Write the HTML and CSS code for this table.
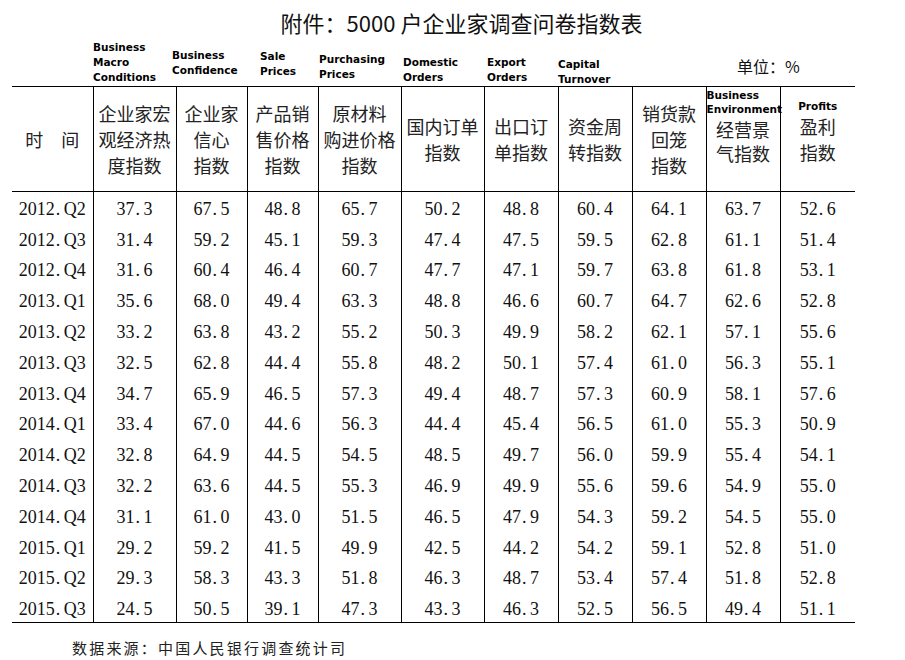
FILE: index.html
```html
<!DOCTYPE html>
<html lang="zh-CN">
<head>
<meta charset="utf-8">
<title>附件：5000 户企业家调查问卷指数表</title>
<link rel="stylesheet" href="styles.css">
</head>
<body>
<div class="page">
  <h1 class="title">附件：5000 户企业家调查问卷指数表</h1>
  <div class="labels">
    <div class="lab w81"></div>
    <div class="lab w83 l-macro">Business<br>Macro<br>Conditions</div>
    <div class="lab w71 l-conf">Business<br>Confidence</div>
    <div class="lab w71 l-sale">Sale<br>Prices</div>
    <div class="lab w83 l-purch">Purchasing<br>Prices</div>
    <div class="lab w83 l-dom">Domestic<br>Orders</div>
    <div class="lab w74 l-exp">Export<br>Orders</div>
    <div class="lab w74 l-cap">Capital<br>Turnover</div>
    <div class="unit">单位：%</div>
  </div>
  <table class="tbl">
    <colgroup>
      <col class="c81"><col class="c83"><col class="c71"><col class="c71"><col class="c83"><col class="c83"><col class="c74"><col class="c74"><col class="c74"><col class="c74"><col class="c75">
    </colgroup>
    <thead>
      <tr>
        <th>时　间</th>
        <th>企业家宏<br>观经济热<br>度指数</th>
        <th>企业家<br>信心<br>指数</th>
        <th>产品销<br>售价格<br>指数</th>
        <th>原材料<br>购进价格<br>指数</th>
        <th>国内订单<br>指数</th>
        <th>出口订<br>单指数</th>
        <th>资金周<br>转指数</th>
        <th>销货款<br>回笼<br>指数</th>
        <th class="has-en env"><span class="en en-left">Business<br>Environment</span>经营景<br>气指数</th>
        <th class="has-en"><span class="en en-center">Profits</span>盈利<br>指数</th>
      </tr>
    </thead>
    <tbody>
      <tr><td>2012<i>.</i>Q2</td><td>37<i>.</i>3</td><td>67<i>.</i>5</td><td>48<i>.</i>8</td><td>65<i>.</i>7</td><td>50<i>.</i>2</td><td>48<i>.</i>8</td><td>60<i>.</i>4</td><td>64<i>.</i>1</td><td>63<i>.</i>7</td><td>52<i>.</i>6</td></tr>
      <tr><td>2012<i>.</i>Q3</td><td>31<i>.</i>4</td><td>59<i>.</i>2</td><td>45<i>.</i>1</td><td>59<i>.</i>3</td><td>47<i>.</i>4</td><td>47<i>.</i>5</td><td>59<i>.</i>5</td><td>62<i>.</i>8</td><td>61<i>.</i>1</td><td>51<i>.</i>4</td></tr>
      <tr><td>2012<i>.</i>Q4</td><td>31<i>.</i>6</td><td>60<i>.</i>4</td><td>46<i>.</i>4</td><td>60<i>.</i>7</td><td>47<i>.</i>7</td><td>47<i>.</i>1</td><td>59<i>.</i>7</td><td>63<i>.</i>8</td><td>61<i>.</i>8</td><td>53<i>.</i>1</td></tr>
      <tr><td>2013<i>.</i>Q1</td><td>35<i>.</i>6</td><td>68<i>.</i>0</td><td>49<i>.</i>4</td><td>63<i>.</i>3</td><td>48<i>.</i>8</td><td>46<i>.</i>6</td><td>60<i>.</i>7</td><td>64<i>.</i>7</td><td>62<i>.</i>6</td><td>52<i>.</i>8</td></tr>
      <tr><td>2013<i>.</i>Q2</td><td>33<i>.</i>2</td><td>63<i>.</i>8</td><td>43<i>.</i>2</td><td>55<i>.</i>2</td><td>50<i>.</i>3</td><td>49<i>.</i>9</td><td>58<i>.</i>2</td><td>62<i>.</i>1</td><td>57<i>.</i>1</td><td>55<i>.</i>6</td></tr>
      <tr><td>2013<i>.</i>Q3</td><td>32<i>.</i>5</td><td>62<i>.</i>8</td><td>44<i>.</i>4</td><td>55<i>.</i>8</td><td>48<i>.</i>2</td><td>50<i>.</i>1</td><td>57<i>.</i>4</td><td>61<i>.</i>0</td><td>56<i>.</i>3</td><td>55<i>.</i>1</td></tr>
      <tr><td>2013<i>.</i>Q4</td><td>34<i>.</i>7</td><td>65<i>.</i>9</td><td>46<i>.</i>5</td><td>57<i>.</i>3</td><td>49<i>.</i>4</td><td>48<i>.</i>7</td><td>57<i>.</i>3</td><td>60<i>.</i>9</td><td>58<i>.</i>1</td><td>57<i>.</i>6</td></tr>
      <tr><td>2014<i>.</i>Q1</td><td>33<i>.</i>4</td><td>67<i>.</i>0</td><td>44<i>.</i>6</td><td>56<i>.</i>3</td><td>44<i>.</i>4</td><td>45<i>.</i>4</td><td>56<i>.</i>5</td><td>61<i>.</i>0</td><td>55<i>.</i>3</td><td>50<i>.</i>9</td></tr>
      <tr><td>2014<i>.</i>Q2</td><td>32<i>.</i>8</td><td>64<i>.</i>9</td><td>44<i>.</i>5</td><td>54<i>.</i>5</td><td>48<i>.</i>5</td><td>49<i>.</i>7</td><td>56<i>.</i>0</td><td>59<i>.</i>9</td><td>55<i>.</i>4</td><td>54<i>.</i>1</td></tr>
      <tr><td>2014<i>.</i>Q3</td><td>32<i>.</i>2</td><td>63<i>.</i>6</td><td>44<i>.</i>5</td><td>55<i>.</i>3</td><td>46<i>.</i>9</td><td>49<i>.</i>9</td><td>55<i>.</i>6</td><td>59<i>.</i>6</td><td>54<i>.</i>9</td><td>55<i>.</i>0</td></tr>
      <tr><td>2014<i>.</i>Q4</td><td>31<i>.</i>1</td><td>61<i>.</i>0</td><td>43<i>.</i>0</td><td>51<i>.</i>5</td><td>46<i>.</i>5</td><td>47<i>.</i>9</td><td>54<i>.</i>3</td><td>59<i>.</i>2</td><td>54<i>.</i>5</td><td>55<i>.</i>0</td></tr>
      <tr><td>2015<i>.</i>Q1</td><td>29<i>.</i>2</td><td>59<i>.</i>2</td><td>41<i>.</i>5</td><td>49<i>.</i>9</td><td>42<i>.</i>5</td><td>44<i>.</i>2</td><td>54<i>.</i>2</td><td>59<i>.</i>1</td><td>52<i>.</i>8</td><td>51<i>.</i>0</td></tr>
      <tr><td>2015<i>.</i>Q2</td><td>29<i>.</i>3</td><td>58<i>.</i>3</td><td>43<i>.</i>3</td><td>51<i>.</i>8</td><td>46<i>.</i>3</td><td>48<i>.</i>7</td><td>53<i>.</i>4</td><td>57<i>.</i>4</td><td>51<i>.</i>8</td><td>52<i>.</i>8</td></tr>
      <tr><td>2015<i>.</i>Q3</td><td>24<i>.</i>5</td><td>50<i>.</i>5</td><td>39<i>.</i>1</td><td>47<i>.</i>3</td><td>43<i>.</i>3</td><td>46<i>.</i>3</td><td>52<i>.</i>5</td><td>56<i>.</i>5</td><td>49<i>.</i>4</td><td>51<i>.</i>1</td></tr>
    </tbody>
  </table>
  <p class="source">数据来源：中国人民银行调查统计司</p>
</div>
</body>
</html>
```

FILE: styles.css
```css
html, body {
  margin: 0;
  padding: 0;
  background: #fff;
}

.page {
  width: 905px;
  height: 660px;
  overflow: hidden;
  color: #111;
}

.title {
  margin: 0;
  padding: 7px 0 0 18px;
  height: 30px;
  line-height: 30px;
  font-family: "Noto Sans CJK SC", "Noto Sans", sans-serif;
  font-size: 22px;
  font-weight: normal;
  text-align: center;
  color: #111;
}

.labels {
  display: flex;
  align-items: flex-end;
  height: 49px;
  margin-left: 12px;
  font-family: "DejaVu Sans", "Liberation Sans", sans-serif;
  font-weight: bold;
  font-size: 10.5px;
  line-height: 15px;
  color: #000;
}

.lab { flex: none; white-space: nowrap; }
.w81 { width: 81px; }
.w83 { width: 83px; }
.w71 { width: 71px; }
.w74 { width: 74px; }

.l-macro { padding-bottom: 1px; }
.l-conf { margin-left: -4px; width: 75px; padding-bottom: 8px; }
.l-sale { padding-left: 13px; width: 58px; padding-bottom: 7px; }
.l-purch { padding-left: 1px; width: 82px; padding-bottom: 4px; }
.l-dom { padding-left: 2px; width: 81px; padding-bottom: 1px; }
.l-exp { padding-left: 3px; width: 71px; padding-bottom: 1px; }
.l-cap { margin-bottom: -1px; }

.unit {
  flex: none;
  padding-left: 105px;
  padding-bottom: 10px;
  font-family: "Noto Sans CJK SC", "Noto Sans", sans-serif;
  font-weight: normal;
  font-size: 16px;
  line-height: 20px;
  color: #111;
}

.tbl {
  margin-left: 12px;
  width: 843px;
  table-layout: fixed;
  border-collapse: collapse;
  border-top: 1px solid #000;
  border-bottom: 1px solid #000;
}

.c81 { width: 81px; }
.c83 { width: 83px; }
.c71 { width: 71px; }
.c74 { width: 74px; }
.c75 { width: 75px; }

.tbl th,
.tbl td {
  padding: 0;
  border-left: 1px solid #000;
  text-align: center;
  vertical-align: middle;
}

.tbl th:first-child,
.tbl td:first-child {
  border-left: none;
}

.tbl thead tr {
  height: 105px;
  border-bottom: 1px solid #000;
}

.tbl th {
  font-family: "Noto Sans CJK SC", "Noto Sans", sans-serif;
  font-weight: normal;
  font-size: 18px;
  line-height: 26px;
  color: #222;
  white-space: nowrap;
}

.tbl th.env {
  line-height: 24px;
  padding-top: 4px;
}

.has-en {
  position: relative;
}

.en {
  position: absolute;
  left: 0;
  right: 0;
  font-family: "DejaVu Sans", "Liberation Sans", sans-serif;
  font-weight: bold;
  font-size: 10.5px;
  line-height: 14px;
  color: #000;
  white-space: nowrap;
}

.en-left {
  top: 1px;
  text-align: left;
}

.en-center {
  top: 12px;
  text-align: center;
}

.tbl tbody tr {
  height: 30.8px;
}

.tbl td {
  font-family: "Liberation Serif", "Times New Roman", serif;
  font-size: 18px;
  line-height: 22px;
  padding-top: 4px;
  color: #111;
  white-space: nowrap;
}

.tbl td i {
  font-style: normal;
  display: inline-block;
  width: 9px;
  padding-left: 1px;
  box-sizing: border-box;
  text-align: left;
}

.source {
  margin: 15px 0 0 72px;
  font-family: "Noto Sans CJK SC", "Noto Sans", sans-serif;
  font-size: 15px;
  line-height: 20px;
  letter-spacing: 2.2px;
  color: #222;
}
```
